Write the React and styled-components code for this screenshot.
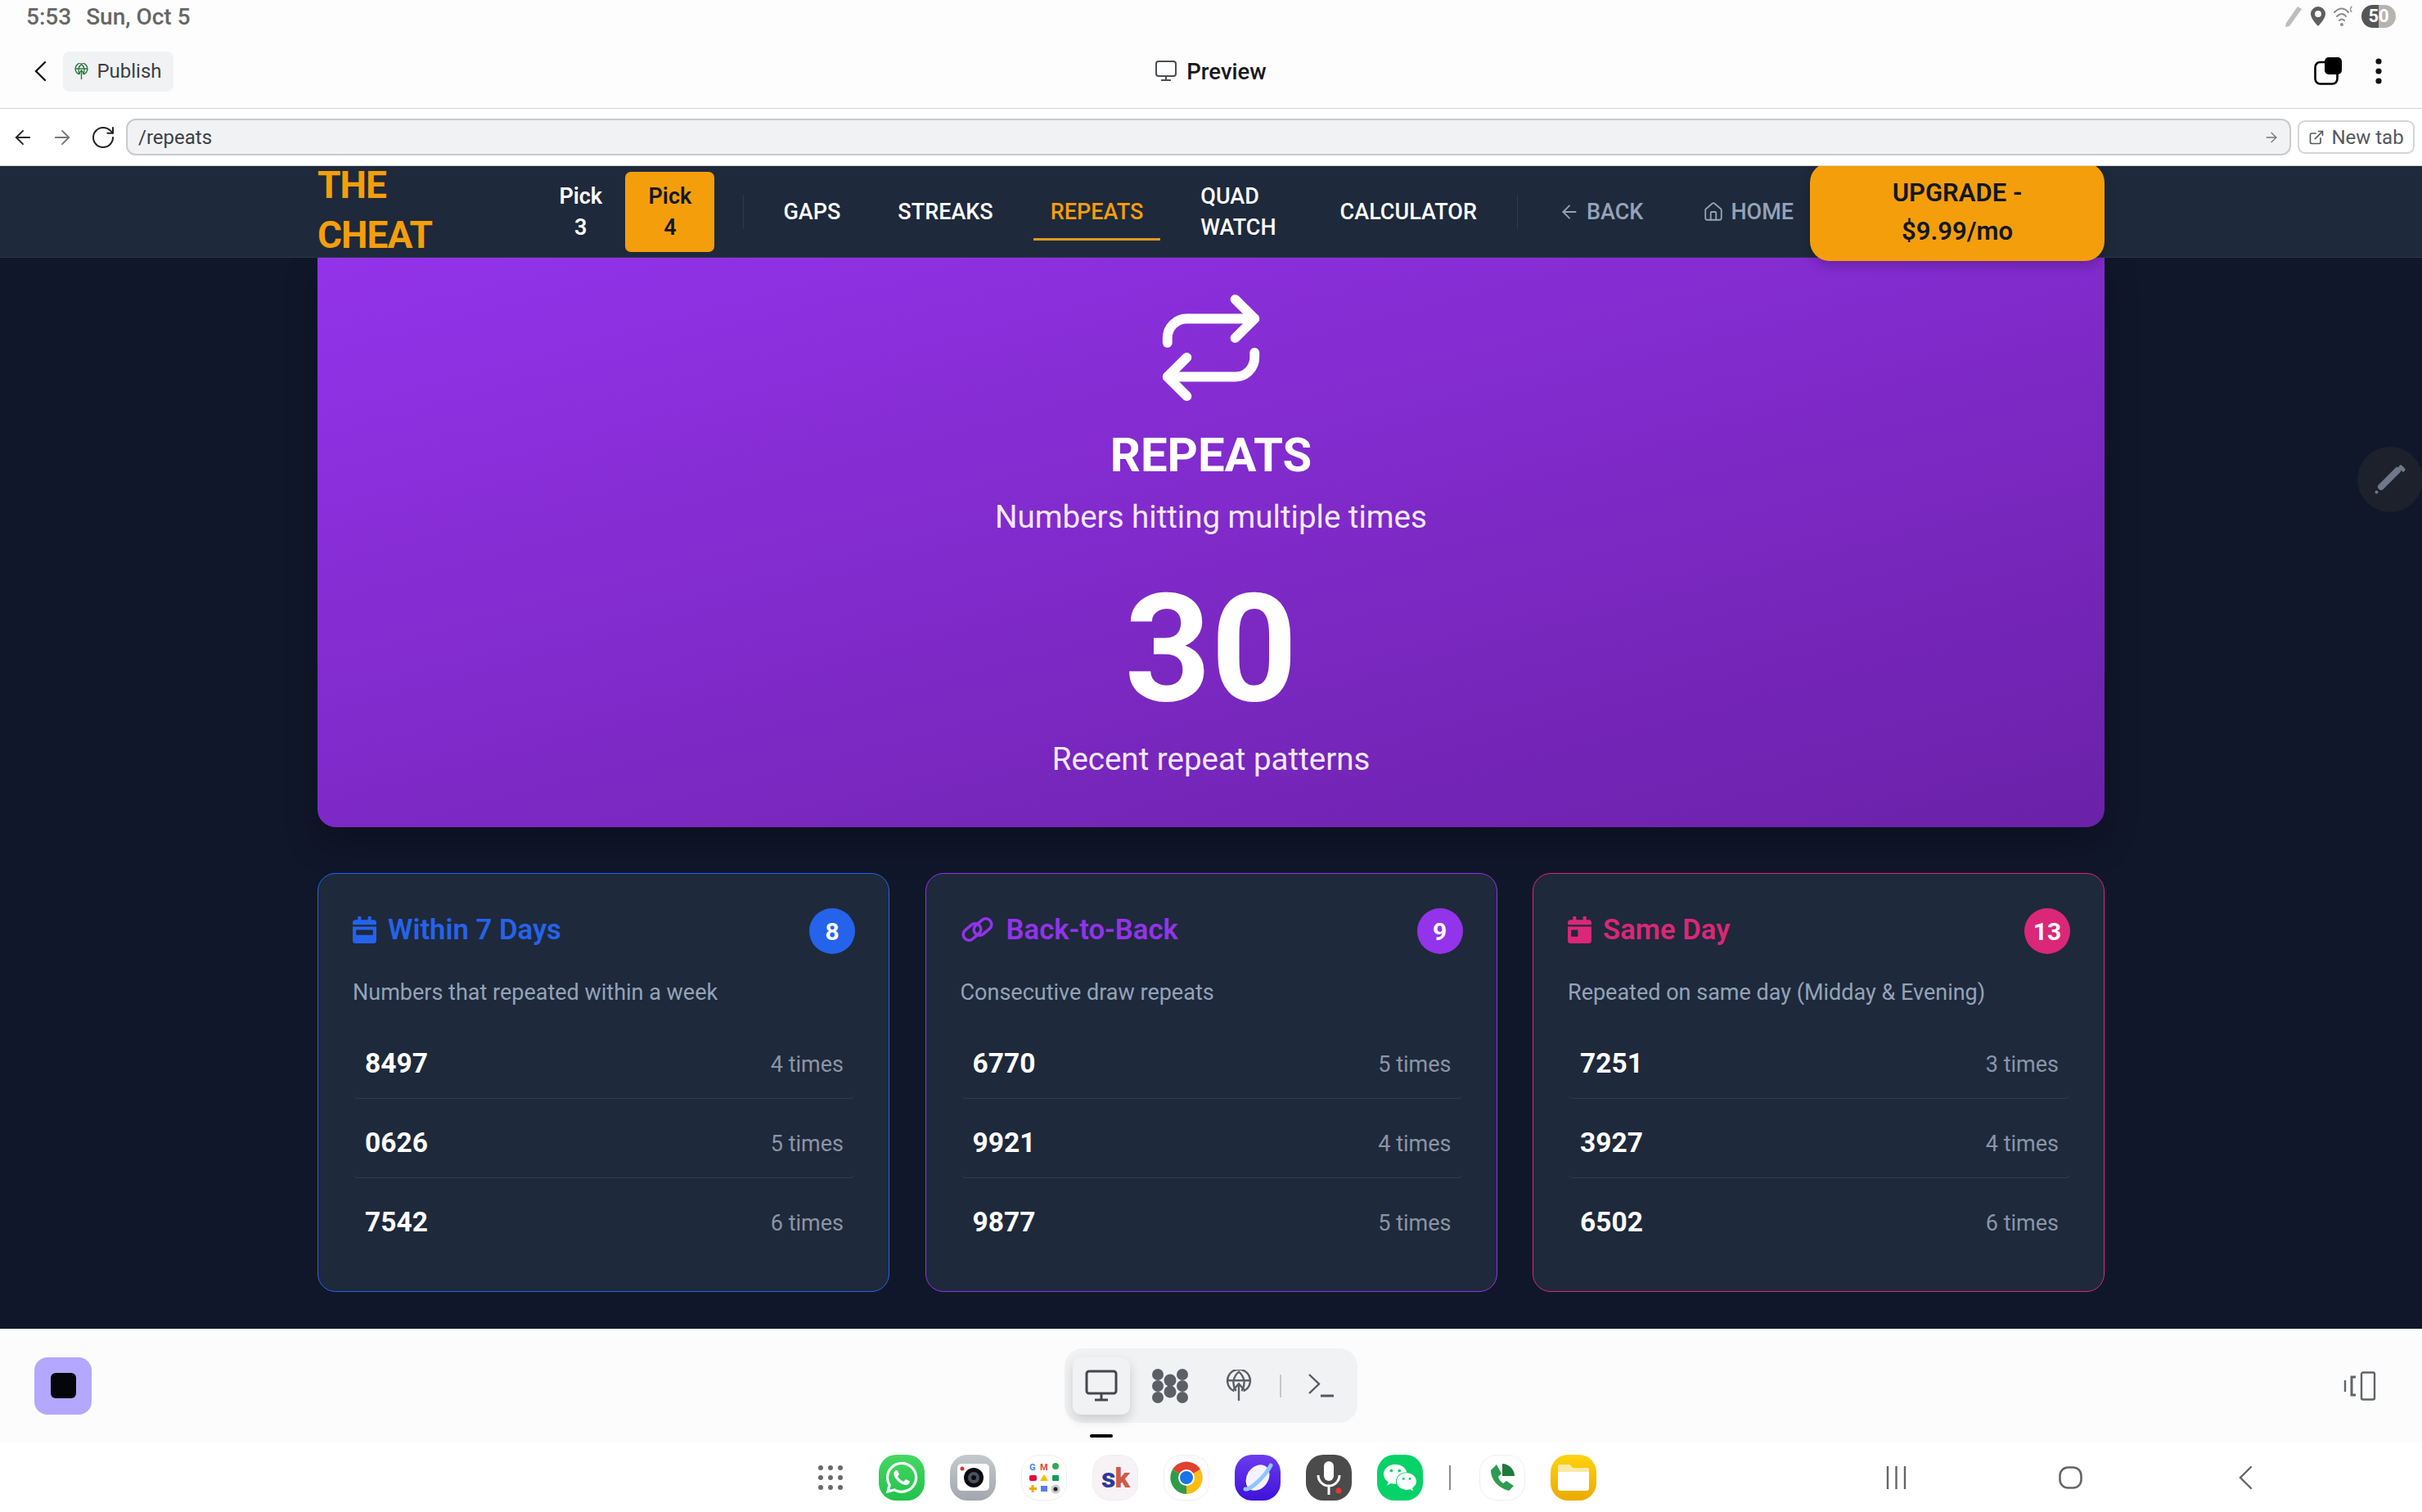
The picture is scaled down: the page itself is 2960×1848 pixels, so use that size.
import React from "react";
import styled, { createGlobalStyle } from "styled-components";
import {
  ArrowLeft,
  ArrowRight,
  ExternalLink,
  House,
  Repeat,
  RotateCw,
} from "lucide-react";
import { FaCalendarDay, FaCalendarWeek, FaWeixin, FaWhatsapp } from "react-icons/fa";

const GlobalStyle = createGlobalStyle`
  * { box-sizing: border-box; }
  html, body { margin: 0; padding: 0; background: #fff; }
  body { font-family: Roboto, "Liberation Sans", sans-serif; overflow: hidden; }
`;

const Screen = styled.div`
  position: relative;
  width: 2960px;
  height: 1848px;
  display: flex;
  flex-direction: column;
  overflow: hidden;
`;

/* device + browser chrome */
const Chrome = styled.div`
  position: relative;
  z-index: 3;
  background: #fdfdfd;
`;
const StatusBar = styled.div`
  height: 40px;
  padding: 0 32px;
  display: flex;
  align-items: center;
  justify-content: space-between;
  font-size: 28px;
  font-weight: 500;
  color: #666;
`;
const StatusLeft = styled.div`
  display: flex;
  gap: 18px;
`;
const StatusIcons = styled.div`
  display: flex;
  align-items: center;
  gap: 10px;
`;
const Battery = styled.div`
  width: 42px;
  height: 28px;
  border-radius: 14px;
  background: linear-gradient(to right, #555 50%, #b4b4b4 50%);
  color: #fff;
  font-size: 22px;
  font-weight: 700;
  line-height: 28px;
  text-align: center;
`;
const TopBar = styled.div`
  height: 93px;
  padding: 2px 41px 0;
  display: grid;
  grid-template-columns: 1fr auto 1fr;
  align-items: center;
  border-bottom: 1px solid #d4d5d7;
`;
const TopLeft = styled.div`
  display: flex;
  align-items: center;
  gap: 20px;
`;
const Publish = styled.div`
  width: 135px;
  height: 49px;
  border-radius: 8px;
  background: #f1f2f4;
  display: flex;
  align-items: center;
  justify-content: center;
  gap: 10px;
  font-size: 24px;
  color: #3c3f44;
`;
const PreviewLabel = styled.div`
  display: flex;
  align-items: center;
  gap: 12px;
  font-size: 27.5px;
  font-weight: 500;
  color: #16181b;
`;
const TopRight = styled.div`
  display: flex;
  align-items: center;
  justify-content: flex-end;
  gap: 41px;
  margin-right: 8px;
`;
const UrlRow = styled.div`
  height: 70px;
  padding: 0 9px 0 14px;
  display: flex;
  align-items: center;
  background: #fff;
  border-bottom: 1px solid #d4d5d7;
`;
const UrlButtons = styled.div`
  display: flex;
  align-items: center;
  gap: 20px;
  margin-right: 12px;
`;
const UrlInput = styled.div`
  flex: 1;
  height: 45px;
  padding: 0 12px 0 13px;
  border: 2px solid #c8cacd;
  border-radius: 12px;
  background: #f1f2f4;
  display: flex;
  align-items: center;
  justify-content: space-between;
  font-size: 24px;
  color: #3c3f44;
`;
const NewTab = styled.div`
  width: 143px;
  height: 41px;
  margin-left: 8px;
  border: 2px solid #d4d5d7;
  border-radius: 9px;
  display: flex;
  align-items: center;
  justify-content: center;
  gap: 8px;
  font-size: 24px;
  color: #55585d;
`;

/* app nav */
const Nav = styled.nav`
  position: relative;
  z-index: 2;
  height: 112px;
  flex: none;
  background: #1e293b;
  border-bottom: 1px solid #2a3549;
`;
const NavInner = styled.div`
  width: 2184px;
  height: 100%;
  margin: 0 auto;
  display: flex;
  align-items: center;
`;
const Logo = styled.div`
  width: 268px;
  font-size: 46px;
  font-weight: 700;
  line-height: 61px;
  letter-spacing: -1px;
  color: #f59e0b;
  margin-top: -3px;
`;
const PickButton = styled.div`
  width: 109.5px;
  height: 98px;
  border-radius: 7px;
  display: flex;
  align-items: center;
  justify-content: center;
  text-align: center;
  font-size: 27px;
  font-weight: 600;
  line-height: 38px;
  background: ${(p) => (p.$active ? "#f59e0b" : "transparent")};
  color: ${(p) => (p.$active ? "#111827" : "#ffffff")};
`;
const NavDivider = styled.div`
  width: 1px;
  height: 42px;
  margin: 0 ${(p) => p.$right}px 0 ${(p) => p.$left}px;
  background: #2c3a4f;
`;
const NavLink = styled.div`
  position: relative;
  padding: 0 21px;
  margin-right: ${(p) => p.$gap}px;
  font-size: 27px;
  font-weight: 500;
  line-height: 38px;
  color: ${(p) => (p.$active ? "#f59e0b" : "#ffffff")};
  &::after {
    content: "";
    display: ${(p) => (p.$active ? "block" : "none")};
    position: absolute;
    left: 0;
    right: 0;
    bottom: -16px;
    height: 3px;
    background: #e0981f;
  }
`;
const GhostLink = styled.div`
  display: flex;
  align-items: center;
  gap: ${(p) => p.$gap}px;
  margin-right: ${(p) => p.$right}px;
  font-size: 27px;
  font-weight: 500;
  color: #94a3b8;
`;
const Upgrade = styled.div`
  width: 360px;
  height: 120px;
  flex: none;
  border-radius: 24px;
  background: #f59e0b;
  display: flex;
  align-items: center;
  justify-content: center;
  text-align: center;
  font-size: 31px;
  font-weight: 600;
  line-height: 47px;
  color: #111827;
  box-shadow: 0 6px 14px rgba(0, 0, 0, 0.2);
`;

/* page content */
const Page = styled.main`
  flex: 1;
  background: #10172a;
  display: flex;
  flex-direction: column;
  align-items: center;
`;
const Hero = styled.section`
  width: 2184px;
  height: 696px;
  flex: none;
  padding-top: 39px;
  border-radius: 0 0 22px 22px;
  background: linear-gradient(165deg, #9333ea 0%, #6b21a8 100%);
  color: #fff;
  display: flex;
  flex-direction: column;
  align-items: center;
  box-shadow: 0 20px 40px rgba(0, 0, 0, 0.25);
`;
const HeroTitle = styled.h1`
  margin: 24px 0 0;
  font-size: 58px;
  font-weight: 700;
  line-height: 72px;
`;
const HeroSub = styled.p`
  margin: 10px 0 0;
  font-size: 38.5px;
  font-weight: 400;
  line-height: 60px;
  color: #f3e8ff;
`;
const HeroCount = styled.div`
  margin-top: 39px;
  font-size: 184px;
  font-weight: 700;
  line-height: 184px;
`;
const HeroFoot = styled.p`
  margin: 15px 0 0;
  font-size: 38.5px;
  line-height: 56px;
  color: #f3e8ff;
`;
const Cards = styled.div`
  width: 2184px;
  margin-top: 56px;
  display: grid;
  grid-template-columns: repeat(3, 1fr);
  gap: 43.5px;
`;
const Card = styled.article`
  height: 512px;
  padding: 42px 41px 42px 42px;
  border: 1px solid ${(p) => p.$color};
  border-radius: 22px;
  background: #1e293b;
`;
const CardHead = styled.div`
  display: flex;
  align-items: center;
  justify-content: space-between;
`;
const CardTitle = styled.h3`
  margin: 0;
  padding-bottom: 4px;
  display: flex;
  align-items: center;
  gap: ${(p) => p.$gap}px;
  font-size: 34.7px;
  font-weight: 600;
  color: ${(p) => p.$color};
  & > svg {
    margin-left: ${(p) => p.$shift}px;
  }
`;
const CountBadge = styled.div`
  width: 56px;
  height: 56px;
  border-radius: 50%;
  display: flex;
  align-items: center;
  justify-content: center;
  font-size: 30px;
  font-weight: 700;
  color: #fff;
  background: ${(p) => p.$color};
`;
const CardDesc = styled.p`
  margin: 26px 0 12px;
  font-size: 27px;
  line-height: 42px;
  color: #94a3b8;
`;
const Row = styled.div`
  height: 97px;
  padding: 10px 14px 0 15px;
  display: flex;
  align-items: center;
  justify-content: space-between;
  border-bottom: 1px solid #2f3b50;
  border-radius: 0 0 6px 6px;
  &:last-child {
    border-bottom: 0;
  }
`;
const RowNumber = styled.span`
  font-size: 33.5px;
  font-weight: 700;
  color: #fff;
`;
const RowTimes = styled.span`
  font-size: 27px;
  color: #8a95a6;
  margin-top: 3px;
`;

/* bottom tool bar + dock */
const ToolBar = styled.div`
  height: 139px;
  flex: none;
  background: #fcfcfc;
  display: grid;
  grid-template-columns: 1fr auto 1fr;
  align-items: center;
  padding: 0 42px;
`;
const StopButton = styled.div`
  width: 70px;
  height: 70px;
  border-radius: 16px;
  background: #b4a7ff;
  display: flex;
  align-items: center;
  justify-content: center;
  &::before {
    content: "";
    width: 31px;
    height: 31px;
    border-radius: 6px;
    background: #05060a;
  }
`;
const ToolGroup = styled.div`
  width: 358px;
  height: 91px;
  padding: 11px 10px;
  border-radius: 22px;
  background: #f1f2f4;
  display: flex;
  align-items: center;
`;
const ToolTile = styled.div`
  position: relative;
  width: 70px;
  height: 70px;
  margin-right: ${(p) => p.$gap}px;
  display: flex;
  align-items: center;
  justify-content: center;
  border-radius: 10px;
  background: ${(p) => (p.$active ? "#f1f2f4" : "transparent")};
  box-shadow: ${(p) => (p.$active ? "0 6px 14px rgba(0,0,0,.16)" : "none")};
  &::after {
    content: "";
    display: ${(p) => (p.$active ? "block" : "none")};
    position: absolute;
    left: 21px;
    bottom: -28px;
    width: 28px;
    height: 4px;
    border-radius: 2px;
    background: #000;
  }
`;
const ToolSep = styled.div`
  width: 2px;
  height: 28px;
  margin: 0 33px 0 15px;
  background: #c5c7ca;
`;
const ToolRight = styled.div`
  display: flex;
  justify-content: flex-end;
  margin-right: 14px;
`;
const Dock = styled.div`
  height: 85px;
  flex: none;
  background: #fff;
  padding-left: 1000px;
  display: flex;
  align-items: center;
`;
const AppGrid = styled.div`
  width: 30px;
  margin-right: 44px;
  display: grid;
  grid-template-columns: repeat(3, 6px);
  gap: 6px;
  & > span {
    width: 6px;
    height: 6px;
    border-radius: 50%;
    background: #6a6a6a;
  }
`;
const AppIcon = styled.div`
  width: 56px;
  height: 56px;
  flex: none;
  margin-right: 31px;
  border-radius: 38%;
  display: flex;
  align-items: center;
  justify-content: center;
  overflow: hidden;
  background: ${(p) => p.$bg};
  border: ${(p) => (p.$line ? "1px solid #eeeeee" : "none")};
  color: #fff;
`;
const SkText = styled.span`
  font-size: 34px;
  font-weight: 800;
  letter-spacing: -1px;
  color: #2f3a96;
  & > b {
    color: #cf5a48;
  }
`;
const DockSep = styled.div`
  width: 2px;
  height: 30px;
  margin: 0 35px 0 1px;
  background: #8a8a8a;
`;
const SoftKeys = styled.div`
  margin-left: 323px;
  display: flex;
  align-items: center;
  gap: 186px;
  & > svg:last-child {
    margin-left: 4px;
  }
`;
const EditFab = styled.div`
  position: absolute;
  z-index: 1;
  left: 2881px;
  top: 546px;
  width: 80px;
  height: 80px;
  border-radius: 50%;
  background: #1c212c;
  display: flex;
  align-items: center;
  justify-content: center;
`;

const GlobeUp = ({ size, color, width = 2 }) => (
  <svg width={size} height={size * 1.2} viewBox="0 0 24 29" fill="none" stroke={color} strokeWidth={width} strokeLinecap="round">
    <path d="M7 19.5A10.5 10.5 0 1 1 17 19.5" />
    <path d="M2 10h20M9 19c-3-5-3-12 3-17 6 5 6 12 3 17" />
    <path d="M12 28V13M7.5 18l4.5-5 4.5 5" />
  </svg>
);

const LinkGlyph = () => (
  <svg width="41" height="32" viewBox="0 0 41 32" fill="none" stroke="#9333ea" strokeWidth="3.6" overflow="visible">
    <rect x="2" y="12" width="24" height="14" rx="7" transform="rotate(-40 14 19)" />
    <rect x="15" y="6" width="24" height="14" rx="7" transform="rotate(-40 27 13)" />
  </svg>
);

const BlocksGlyph = () => (
  <svg width="44" height="42" viewBox="0 0 44 42" fill="#5c5f66">
    {[7, 21, 35].map((y) => (
      <React.Fragment key={y}>
        <circle cx="7" cy={y} r="7" />
        <circle cx="37" cy={y} r="7" />
      </React.Fragment>
    ))}
    <circle cx="22" cy="14" r="7.5" />
    <circle cx="22" cy="28" r="7.5" />
  </svg>
);

const ChromeGlyph = () => (
  <svg width="44" height="44" viewBox="0 0 44 44">
    <path d="M22 22 5 12A20 20 0 0 1 39 12Z" fill="#e0402f" />
    <path d="M22 22 39 12A20 20 0 0 1 22 42Z" fill="#fbbc15" />
    <path d="M22 22 22 42A20 20 0 0 1 5 12Z" fill="#2f9b48" />
    <circle cx="22" cy="22" r="10" fill="#fff" />
    <circle cx="22" cy="22" r="8" fill="#1a73e8" />
  </svg>
);

const BrowserGlyph = () => (
  <svg width="46" height="46" viewBox="0 0 46 46" fill="none">
    <ellipse cx="23" cy="23" rx="13" ry="17" transform="rotate(35 23 23)" fill="#f4f3ff" />
    <path d="M8 37C14 38 32 22 39 8" stroke="#8fc6ff" strokeWidth="5" strokeLinecap="round" />
  </svg>
);

const GoogleFolder = () => (
  <svg width="44" height="44" viewBox="0 0 44 44">
    <text x="4" y="13" fontSize="11" fontWeight="700" fontFamily="Roboto" fill="#4285f4">G</text>
    <text x="17" y="13" fontSize="11" fontWeight="700" fontFamily="Roboto" fill="#ea4335">M</text>
    <circle cx="36" cy="8" r="4" fill="#34a853" />
    <rect x="4" y="19" width="9" height="7" rx="2" fill="#e0103a" />
    <path d="M22 18l5 8H17z" fill="#fbbc05" />
    <rect x="32" y="19" width="8" height="7" rx="1" fill="#0f9d58" />
    <path d="M8 31v9M4 35.500h9" stroke="#f2a600" strokeWidth="3" />
    <rect x="18" y="32" width="8" height="7" fill="#5b7be8" />
    <circle cx="36" cy="36" r="5.500" fill="#c9c9cf" />
    <circle cx="36" cy="36" r="2.500" fill="#222" />
  </svg>
);

const CameraGlyph = () => (
  <svg width="39" height="33" viewBox="0 0 39 33">
    <rect width="39" height="33" rx="5" fill="#fff" />
    <circle cx="6" cy="6" r="2.500" fill="#e03030" />
    <circle cx="20" cy="17" r="12" fill="#0c0c10" />
    <circle cx="20" cy="17" r="7" fill="#4a5260" />
    <circle cx="20" cy="17" r="3" fill="#0c0c10" />
  </svg>
);

const MicGlyph = () => (
  <svg width="36" height="44" viewBox="0 0 36 44" fill="none" stroke="#fff" strokeWidth="3">
    <rect x="12" y="2" width="12" height="24" rx="6" fill="#fff" stroke="none" />
    <path d="M5 19a13 13 0 0 0 26 0M18 32v11" />
    <circle cx="30" cy="38" r="3.500" fill="#e8392b" stroke="none" />
  </svg>
);

const PhoneGlyph = () => (
  <svg width="36" height="38" viewBox="0 0 36 38" fill="none">
    <path d="M11 3 4 10c0 12 10 22 22 25l6-6-9-6-4 3c-3-2-5-5-6-8l4-4z" fill="#2e9b52" />
    <path d="M18 2c8 0 15 7 15 15H18z" fill="#1f7a3d" />
  </svg>
);

const FilesGlyph = () => (
  <svg width="38" height="32" viewBox="0 0 38 32">
    <path d="M3 0h11l4 4h17a3 3 0 0 1 3 3v22a3 3 0 0 1-3 3H3a3 3 0 0 1-3-3V3a3 3 0 0 1 3-3z" fill="#fff" />
    <path d="M0 3a3 3 0 0 1 3-3h11l4 4h17a3 3 0 0 1 3 3v2H0z" fill="#fde9a4" />
  </svg>
);

const CARDS = [
  {
    title: "Within 7 Days",
    color: "#2563eb",
    gap: 12,
    shift: -2,
    icon: <FaCalendarWeek size={33} />,
    count: 8,
    desc: "Numbers that repeated within a week",
    rows: [["8497", "4 times"], ["0626", "5 times"], ["7542", "6 times"]],
  },
  {
    title: "Back-to-Back",
    color: "#9333ea",
    gap: 15,
    shift: 0,
    icon: <LinkGlyph />,
    count: 9,
    desc: "Consecutive draw repeats",
    rows: [["6770", "5 times"], ["9921", "4 times"], ["9877", "5 times"]],
  },
  {
    title: "Same Day",
    color: "#db2777",
    gap: 12,
    shift: -2,
    icon: <FaCalendarDay size={33} />,
    count: 13,
    desc: "Repeated on same day (Midday & Evening)",
    rows: [["7251", "3 times"], ["3927", "4 times"], ["6502", "6 times"]],
  },
];

const App = () => {
  return (
    <Screen>
      <GlobalStyle />
      <Chrome>
        <StatusBar>
          <StatusLeft>
            <span>5:53</span>
            <span>Sun, Oct 5</span>
          </StatusLeft>
          <StatusIcons>
            <svg width="22" height="26" viewBox="0 0 22 26" fill="#bdbdbd">
              <path d="M16 1l5 3L6 25l-5 1 1-5z" />
            </svg>
            <svg width="18" height="24" viewBox="0 0 18 24" fill="#5e5e5e">
              <path fillRule="evenodd" d="M9 0a9 9 0 0 1 9 9c0 6-9 15-9 15S0 15 0 9a9 9 0 0 1 9-9zm0 5a4 4 0 1 0 0 8 4 4 0 0 0 0-8z" />
            </svg>
            <svg width="24" height="26" viewBox="0 0 24 26" fill="none" stroke="#8a8a8a" strokeWidth="2" strokeLinecap="round">
              <path d="M1 8c6-6 12-6 17 0M4 13c4-4 8-4 11 0M7 18c2-2 4-2 6 0" />
              <circle cx="10" cy="23" r="1" />
              <path d="M22 1c-2 2-2 6 0 6" strokeWidth="1.4" />
            </svg>
            <Battery>50</Battery>
          </StatusIcons>
        </StatusBar>
        <TopBar>
          <TopLeft>
            <svg width="16" height="26" viewBox="0 0 16 26" fill="none" stroke="#111" strokeWidth="2.400" strokeLinecap="round">
              <path d="M14 2 3 13l11 11" />
            </svg>
            <Publish>
              <GlobeUp size={17} color="#2c7a3f" />
              Publish
            </Publish>
          </TopLeft>
          <PreviewLabel>
            <svg width="26" height="26" viewBox="0 0 26 26" fill="none" stroke="#4b4e54" strokeWidth="2">
              <rect x="1" y="1" width="24" height="18" rx="3" />
              <path d="M13 19v5M7 24h12" />
            </svg>
            Preview
          </PreviewLabel>
          <TopRight>
            <svg width="34" height="34" viewBox="0 0 34 34">
              <rect x="1.500" y="6" width="27" height="26.500" rx="6" fill="none" stroke="#000" strokeWidth="2.600" />
              <rect x="13" y="0" width="21" height="21" rx="5" fill="#000" />
            </svg>
            <svg width="8" height="32" viewBox="0 0 8 32" fill="#111">
              <circle cx="4" cy="4" r="3.600" />
              <circle cx="4" cy="16" r="3.600" />
              <circle cx="4" cy="28" r="3.600" />
            </svg>
          </TopRight>
        </TopBar>
        <UrlRow>
          <UrlButtons>
            <ArrowLeft size={28} color="#222" strokeWidth={1.6} />
            <ArrowRight size={28} color="#777" strokeWidth={1.6} />
            <RotateCw size={32} color="#222" strokeWidth={1.5} />
          </UrlButtons>
          <UrlInput>
            /repeats
            <ArrowRight size={20} color="#777" strokeWidth={1.6} />
          </UrlInput>
          <NewTab>
            <ExternalLink size={20} color="#55585d" />
            New tab
          </NewTab>
        </UrlRow>
      </Chrome>

      <Nav>
        <NavInner>
          <Logo>
            THE
            <br />
            CHEAT
          </Logo>
          <PickButton>
            Pick
            <br />3
          </PickButton>
          <PickButton $active>
            Pick
            <br />4
          </PickButton>
          <NavDivider $left={35} $right={27} />
          <NavLink $gap={28}>GAPS</NavLink>
          <NavLink $gap={28}>STREAKS</NavLink>
          <NavLink $gap={28} $active>
            REPEATS
          </NavLink>
          <NavLink $gap={36}>
            QUAD
            <br />
            WATCH
          </NavLink>
          <NavLink $gap={28}>CALCULATOR</NavLink>
          <NavDivider $left={0} $right={50} />
          <GhostLink $gap={8} $right={73}>
            <ArrowLeft size={26} strokeWidth={1.7} />
            BACK
          </GhostLink>
          <GhostLink $gap={8} $right={20}>
            <House size={26} strokeWidth={1.7} />
            HOME
          </GhostLink>
          <Upgrade>
            UPGRADE -
            <br />
            $9.99/mo
          </Upgrade>
        </NavInner>
      </Nav>

      <Page>
        <Hero>
          <Repeat size={142} strokeWidth={2} color="#fff" />
          <HeroTitle>REPEATS</HeroTitle>
          <HeroSub>Numbers hitting multiple times</HeroSub>
          <HeroCount>30</HeroCount>
          <HeroFoot>Recent repeat patterns</HeroFoot>
        </Hero>
        <Cards>
          {CARDS.map((card) => (
            <Card key={card.title} $color={card.color}>
              <CardHead>
                <CardTitle $color={card.color} $gap={card.gap} $shift={card.shift}>
                  {card.icon}
                  {card.title}
                </CardTitle>
                <CountBadge $color={card.color}>{card.count}</CountBadge>
              </CardHead>
              <CardDesc>{card.desc}</CardDesc>
              {card.rows.map(([num, times]) => (
                <Row key={num}>
                  <RowNumber>{num}</RowNumber>
                  <RowTimes>{times}</RowTimes>
                </Row>
              ))}
            </Card>
          ))}
        </Cards>
      </Page>

      <EditFab>
        <svg width="40" height="40" viewBox="-20 -20 40 40" fill="none" stroke="#70778a" strokeLinecap="round">
          <path d="M-11 9 9-11" strokeWidth="8" />
          <path d="M13-15 16-12" strokeWidth="5" />
          <circle cx="-16.500" cy="15.500" r="1" strokeWidth="2" />
        </svg>
      </EditFab>

      <ToolBar>
        <StopButton />
        <ToolGroup>
          <ToolTile $active $gap={14}>
            <svg width="40" height="40" viewBox="0 0 40 40" fill="none" stroke="#44474d" strokeWidth="3">
              <rect x="2" y="2" width="36" height="27" rx="3" />
              <path d="M20 29v8M12 37h16" />
            </svg>
          </ToolTile>
          <ToolTile $gap={14}>
            <BlocksGlyph />
          </ToolTile>
          <ToolTile $gap={0}>
            <GlobeUp size={32} color="#5c5f66" width={1.8} />
          </ToolTile>
          <ToolSep />
          <svg width="31" height="30" viewBox="0 0 31 30" fill="none" stroke="#55585e" strokeWidth="2.400">
            <path d="M1 1l12 11.500L1 24" />
            <path d="M15 27h16" strokeWidth="3" />
          </svg>
        </ToolGroup>
        <ToolRight>
          <svg width="40" height="36" viewBox="0 0 40 36" fill="none" stroke="#61656b" strokeWidth="2.400">
            <rect x="22" y="1.500" width="16" height="33" rx="2" />
            <path d="M15 7h-5v22h5" strokeWidth="3" />
            <path d="M2 11v14" />
          </svg>
        </ToolRight>
      </ToolBar>

      <Dock>
        <AppGrid>
          {Array.from({ length: 9 }, (_, i) => (
            <span key={i} />
          ))}
        </AppGrid>
        <AppIcon $bg="linear-gradient(#45d863,#22c24a)">
          <FaWhatsapp size={44} />
        </AppIcon>
        <AppIcon $bg="linear-gradient(#c4c9cc,#a3a6b0)">
          <CameraGlyph />
        </AppIcon>
        <AppIcon $bg="#fff" $line>
          <GoogleFolder />
        </AppIcon>
        <AppIcon $bg="#f7f2f6" $line>
          <SkText>
            s<b>k</b>
          </SkText>
        </AppIcon>
        <AppIcon $bg="#fff" $line>
          <ChromeGlyph />
        </AppIcon>
        <AppIcon $bg="linear-gradient(#6d3cf0,#3d12d8)">
          <BrowserGlyph />
        </AppIcon>
        <AppIcon $bg="#4b4b4b">
          <MicGlyph />
        </AppIcon>
        <AppIcon $bg="#06d268">
          <FaWeixin size={42} />
        </AppIcon>
        <DockSep />
        <AppIcon $bg="#fff" $line>
          <PhoneGlyph />
        </AppIcon>
        <AppIcon $bg="linear-gradient(#ffd30f,#eca900)">
          <FilesGlyph />
        </AppIcon>
        <SoftKeys>
          <svg width="25" height="28" viewBox="0 0 25 28" stroke="#666" strokeWidth="2.400">
            <path d="M2 0v28M12.500 0v28M23 0v28" />
          </svg>
          <svg width="29" height="28" viewBox="0 0 29 28" fill="none" stroke="#666" strokeWidth="2.600">
            <rect x="1.500" y="1.500" width="26" height="25" rx="10" />
          </svg>
          <svg width="18" height="30" viewBox="0 0 18 30" fill="none" stroke="#666" strokeWidth="2.400" strokeLinecap="round">
            <path d="M16 2 3 15l13 13" />
          </svg>
        </SoftKeys>
      </Dock>
    </Screen>
  );
};

export default App;
